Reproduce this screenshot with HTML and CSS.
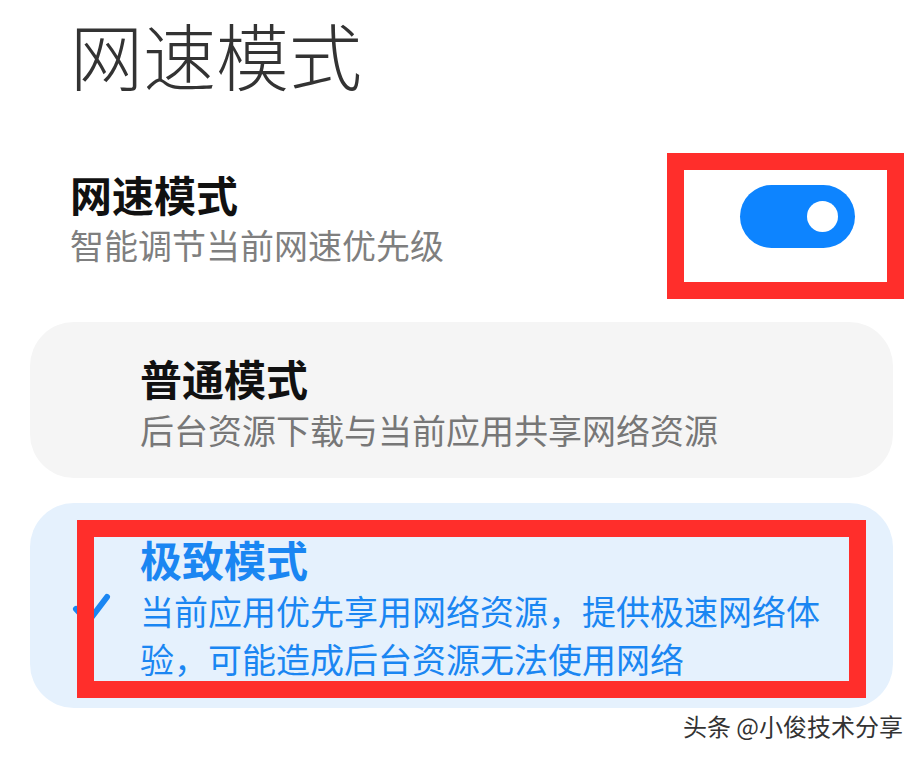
FILE: index.html
```html
<!DOCTYPE html>
<html lang="zh-CN">
<head>
<meta charset="utf-8">
<title>网速模式</title>
<link rel="stylesheet" href="styles.css">
</head>
<body>
<div class="page">
  <h1 class="page-title">网速模式</h1>

  <div class="setting-row">
    <div class="setting-text">
      <div class="setting-title">网速模式</div>
      <div class="setting-desc">智能调节当前网速优先级</div>
    </div>
    <div class="switch is-on"><span class="switch-knob"></span></div>
  </div>

  <div class="mode-list">
    <div class="mode-card">
      <div class="mode-check"></div>
      <div class="mode-text">
        <div class="mode-title">普通模式</div>
        <div class="mode-desc">后台资源下载与当前应用共享网络资源</div>
      </div>
    </div>
    <div class="mode-card is-selected">
      <div class="mode-check">
        <svg width="110" height="40" viewBox="0 0 110 40" aria-hidden="true">
          <path d="M46 21 L58 34 L77 9" fill="none" stroke="#1a86f2" stroke-width="6" stroke-linecap="round" stroke-linejoin="round"/>
        </svg>
      </div>
      <div class="mode-text">
        <div class="mode-title">极致模式</div>
        <div class="mode-desc">当前应用优先享用网络资源，提供极速网络体验，可能造成后台资源无法使用网络</div>
      </div>
    </div>
  </div>

  <div class="annot annot-switch"></div>
  <div class="annot annot-mode"></div>
  <div class="watermark">头条 @小俊技术分享</div>
</div>
</body>
</html>
```

FILE: styles.css
```css
* { box-sizing: border-box; }

html, body {
  margin: 0;
  padding: 0;
  background: #ffffff;
}

body {
  font-family: "Noto Sans CJK SC", "Noto Sans", sans-serif;
  color: #111111;
}

.page {
  position: relative;
  width: 923px;
  height: 758px;
  overflow: hidden;
  padding: 0 30px;
}

.page-title {
  margin: 0;
  padding: 0 0 0 40px;
  font-size: 73px;
  line-height: 106px;
  font-weight: 300;
  color: #333333;
}

.setting-row {
  margin-top: 62px;
  padding: 0 38px 0 40px;
  display: flex;
  align-items: center;
  justify-content: space-between;
}

.setting-title {
  font-size: 42px;
  line-height: 52px;
  font-weight: 700;
  color: #111111;
}

.setting-desc {
  font-size: 34px;
  line-height: 50px;
  color: #7f7f7f;
}

.switch {
  position: relative;
  width: 115px;
  height: 63px;
  border-radius: 32px;
  background: #d6d6d6;
  margin-bottom: 5px;
  flex: none;
}

.switch.is-on { background: #0d84ff; }

.switch-knob {
  position: absolute;
  right: 17px;
  top: 16px;
  width: 31px;
  height: 31px;
  border-radius: 50%;
  background: #ffffff;
}

.mode-list {
  margin-top: 52px;
  display: flex;
  flex-direction: column;
  gap: 25px;
}

.mode-card {
  display: flex;
  align-items: center;
  border-radius: 44px;
  background: #f5f5f5;
  padding: 30px 0 22px 0;
}

.mode-check {
  flex: none;
  width: 110px;
  display: flex;
  align-items: center;
}

.mode-check svg { display: block; }

.mode-title {
  font-size: 42px;
  line-height: 52px;
  font-weight: 700;
  color: #111111;
}

.mode-desc {
  font-size: 34px;
  line-height: 52px;
  color: #777777;
}

.mode-card.is-selected {
  background: #e5f1fd;
  padding: 30px 0 25px 0;
}

.mode-card.is-selected .mode-title { color: #1a86f2; }

.mode-card.is-selected .mode-desc {
  width: 690px;
  margin-top: 2px;
  line-height: 48px;
  color: #1a86f2;
}

.annot {
  position: absolute;
  border: 17px solid #ff2e2b;
}

.annot-switch {
  left: 667px;
  top: 153px;
  width: 237px;
  height: 146px;
}

.annot-mode {
  left: 77px;
  top: 520px;
  width: 789px;
  height: 178px;
}

.watermark {
  position: absolute;
  right: 20px;
  top: 710px;
  font-size: 24px;
  line-height: 32px;
  color: #333333;
  text-shadow: 1px 1px 0 #ffffff, -1px -1px 0 #ffffff, 1px -1px 0 #ffffff, -1px 1px 0 #ffffff;
  white-space: nowrap;
}
```
